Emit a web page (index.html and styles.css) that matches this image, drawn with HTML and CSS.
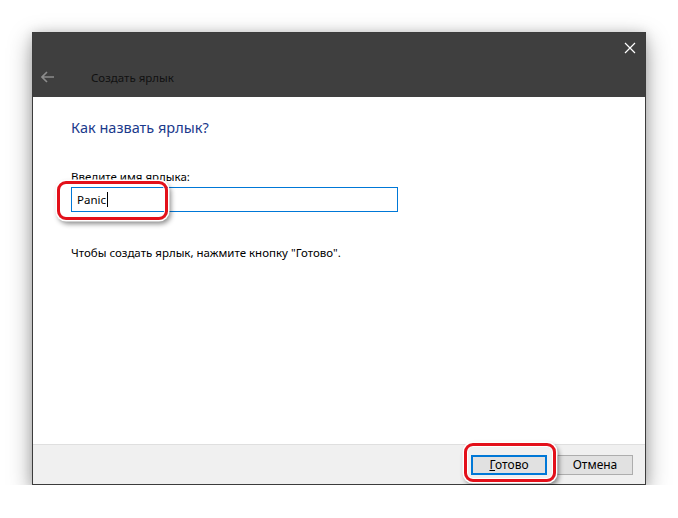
FILE: index.html
```html
<!DOCTYPE html>
<html lang="ru">
<head>
<meta charset="utf-8">
<link rel="stylesheet" href="styles.css">
</head>
<body>
<div class="stage">
  <div class="window">
    <div class="titlebar">
      <div class="close-row">
        <svg class="close" width="12" height="12" viewBox="0 0 12 12"><path d="M1 1L11 11M11 1L1 11" stroke="#fff" stroke-width="1.2" fill="none"/></svg>
      </div>
      <div class="title-row">
        <svg class="back" width="14" height="12" viewBox="0 0 14 12"><path d="M1 6H13M6 1L1 6L6 11" stroke="#8c8c8c" stroke-width="1.6" fill="none"/></svg>
        <span class="title">Создать ярлык</span>
      </div>
    </div>
    <div class="content">
      <h1 class="heading">Как назвать ярлык?</h1>
      <label class="label">Введите имя ярлыка:</label>
      <div class="field">
        <div class="input"><span class="value">Panic</span><span class="caret"></span></div>
        <div class="mark mark-input"></div>
      </div>
      <p class="hint">Чтобы создать ярлык, нажмите кнопку "Готово".</p>
    </div>
    <div class="footer">
      <div class="btn-wrap">
        <button class="btn primary"><u>Г</u>отово</button>
        <div class="mark mark-btn"></div>
      </div>
      <button class="btn">Отмена</button>
    </div>
  </div>
</div>
</body>
</html>
```
FILE: styles.css
```css
html, body { margin: 0; background: #fff; }
body { font-family: "Noto Sans", "Open Sans", sans-serif; font-size: 11.5px; color: #000; }
.stage { padding: 32px 0 0 32px; }
.window {
  width: 612px; height: 451px;
  border: 1px solid #3c3c3c;
  background: #fff;
  display: flex; flex-direction: column;
  box-shadow: 0 8px 22px rgba(0,0,0,0.38), 0 0 10px rgba(0,0,0,0.12);
}
.titlebar { height: 64px; background: #3f3f3f; display: flex; flex-direction: column; }
.close-row { display: flex; justify-content: flex-end; padding: 9px 9px 0 0; height: 21px; }
.close { display: block; }
.title-row { display: flex; align-items: center; height: 22px; margin-top: 3px; padding-left: 8px; }
.back { display: block; }
.title { margin-left: 36px; color: #111; font-size: 11.5px; }
.content { flex: 1; padding: 0 0 0 38px; }
.heading { margin: 19px 0 0; font-weight: normal; font-size: 14.5px; color: #1b3a8c; line-height: 22px; }
.label { display: block; margin-top: 31px; line-height: 16px; }
.field { position: relative; width: 327px; margin-top: 2px; }
.input {
  height: 23px; border: 1px solid #0078d7; box-sizing: content-box;
  display: flex; align-items: center; padding-left: 5px;
}
.value { line-height: 16px; }
.caret { width: 1px; height: 15px; background: #000; margin-left: 1px; }
.mark {
  position: absolute; border: 3px solid #e3101a; border-radius: 9px;
  box-shadow: 0 0 0 1.5px #fff, inset 0 0 0 1px #fff, 2px 3px 5px 1px rgba(0,0,0,0.45);
  pointer-events: none;
}
.mark-input { left: -14px; top: -6px; width: 105px; height: 33px; }
.hint { margin: 33px 0 0; line-height: 16px; }
.footer {
  height: 40px; border-top: 1px solid #dfdfdf; background: #f0f0f0;
  display: flex; justify-content: flex-end; align-items: flex-start;
  padding: 10px 12px 0 0; box-sizing: border-box; gap: 10px;
}
.btn {
  width: 76px; height: 20px; margin: 0; padding: 0;
  border: 1px solid #adadad; background: #e1e1e1;
  font-family: inherit; font-size: 12px; color: #000; line-height: 16px;
}
.btn.primary { border: 2px solid #0078d7; }
.btn u { text-decoration: underline; }
.btn-wrap { position: relative; }
.mark-btn { left: -7px; top: -12px; width: 86px; height: 33px; }
```
